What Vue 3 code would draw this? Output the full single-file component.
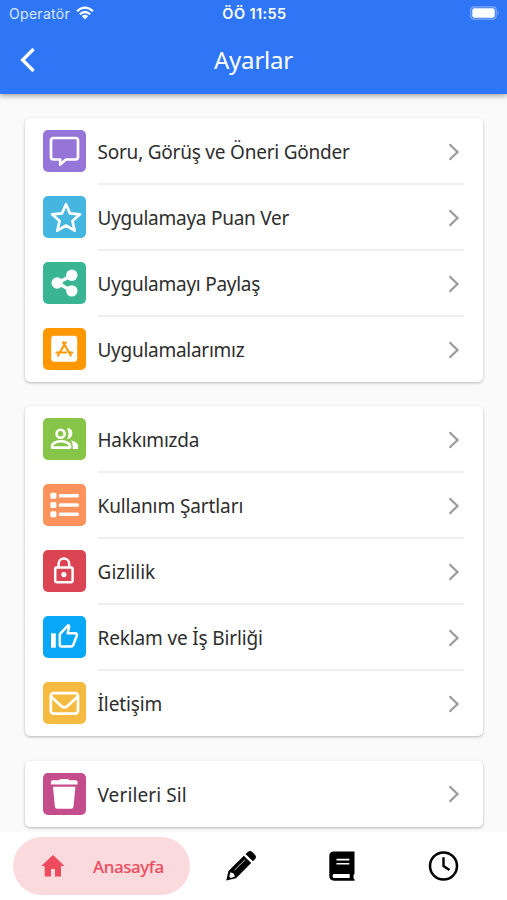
<script setup>
const groups = [
  [
    { label: 'Soru, Görüş ve Öneri Gönder', icon: 'chat', color: '#9575d8', spacing: -0.22 },
    { label: 'Uygulamaya Puan Ver', icon: 'star', color: '#45b6df', spacing: -0.26 },
    { label: 'Uygulamayı Paylaş', icon: 'share', color: '#39b594', spacing: -0.26 },
    { label: 'Uygulamalarımız', icon: 'apps', color: '#ff9800', spacing: -0.27 },
  ],
  [
    { label: 'Hakkımızda', icon: 'people', color: '#87c548', spacing: -0.22 },
    { label: 'Kullanım Şartları', icon: 'list', color: '#fb935d', spacing: -0.1 },
    { label: 'Gizlilik', icon: 'lock', color: '#da4453', spacing: 0.05 },
    { label: 'Reklam ve İş Birliği', icon: 'thumb', color: '#08a8f6', spacing: -0.15 },
    { label: 'İletişim', icon: 'mail', color: '#f5bb40', spacing: -0.1 },
  ],
  [{ label: 'Verileri Sil', icon: 'trash', color: '#c44d8c', spacing: 0.1 }],
]
</script>

<template>
  <div class="screen">
    <header class="header">
      <div class="status">
        <div class="carrier">
          <span>Operatör</span>
          <svg class="wifi" viewBox="0 0 18 14" fill="none" stroke="#fff" stroke-width="2.2">
            <path d="M1 5.1Q9-2 17 5.1" />
            <path d="M3.8 8.3Q9 3.7 14.2 8.3" />
            <path d="M5.8 10.1Q9 7.4 12.2 10.1L9 13.5Z" fill="#fff" stroke="none" />
          </svg>
        </div>
        <span class="time">ÖÖ 11:55</span>
        <svg class="battery" viewBox="0 0 30 14">
          <rect x=".8" y=".8" width="25.4" height="12.4" rx="3.4" fill="none" stroke="#83abfa" stroke-width="1.2" />
          <rect x="2.3" y="2.3" width="22.4" height="9.4" rx="2" fill="#fff" />
          <path d="M27.6 4.8q2.2 2.2 0 4.4z" fill="#83abfa" />
        </svg>
      </div>
      <div class="titlebar">
        <svg class="back" viewBox="0 0 16 26" fill="none" stroke="#fff" stroke-width="3.3">
          <path d="M13.6 2 2.6 13l11 11" />
        </svg>
        <h1>Ayarlar</h1>
      </div>
    </header>

    <main class="content">
      <section v-for="(group, g) in groups" :key="g" class="card">
        <div v-for="item in group" :key="item.label" class="row">
          <div class="tile" :style="{ background: item.color }">
            <svg viewBox="0 0 42 42" fill="none" stroke="#fff" stroke-width="2.7" stroke-linejoin="round">
              <path v-if="item.icon === 'chat'" d="M10.5 8H32.5Q35 8 35 10.5V27Q35 29.5 32.5 29.5H23L17.2 34.5V29.5H10.5Q8 29.5 8 27V10.5Q8 8 10.5 8Z" />
              <path v-else-if="item.icon === 'star'" d="M23 8.2l4 9.2 10 .9-7.6 6.6 2.3 9.8-8.7-5.2-8.7 5.2 2.3-9.8L9 18.3l10-.9Z" />
              <g v-else-if="item.icon === 'share'">
                <path d="M28.5 13.5 14.5 21l14 7.7" stroke-width="3.4" />
                <g fill="#fff" stroke="none"><circle cx="28.8" cy="13.2" r="5.7" /><circle cx="14.2" cy="21" r="5.7" /><circle cx="28.8" cy="28.9" r="5.7" /></g>
              </g>
              <g v-else-if="item.icon === 'apps'">
                <rect x="8.2" y="7.8" width="26" height="26" rx="3.2" fill="#fff" stroke="none" />
                <g stroke="#ff9800" stroke-width="2.1" stroke-linecap="round">
                  <path d="M20 14.3 27.8 27.5M22.8 14.3 16.7 24.5M13.4 24.5H23.1M26.7 24.5H29.3M15.8 26.3 15 27.6" />
                </g>
              </g>
              <g v-else-if="item.icon === 'people'">
                <circle cx="17.6" cy="15.8" r="4" stroke-width="2.6" />
                <path d="M9 29.6V28c0-3.1 5.7-4.7 9-4.7s9 1.6 9 4.7v1.6Z" stroke-width="2.6" />
                <path d="M24 10.5c7-1.5 7.5 10.5 0 10.7 2-3.7 2-7 0-10.7ZM27.7 22.5c4.3.6 7.3 2.7 7.3 5.6v3h-5.3v-3c0-2.1-.5-3.8-2-5.6Z" fill="#fff" stroke="none" />
              </g>
              <g v-else-if="item.icon === 'list'" fill="#fff" stroke="none">
                <rect v-for="y in [8.7, 18, 27.3]" :key="y" x="7.4" :y="y" width="6" height="6" rx="1.5" />
                <rect v-for="y in [10, 19.3, 28.6]" :key="y" x="15.8" :y="y" width="20.2" height="3.4" rx="1.5" />
              </g>
              <g v-else-if="item.icon === 'lock'" stroke-width="2.5">
                <rect x="12.2" y="17.5" width="17.4" height="14.7" rx="1.2" />
                <path d="M15.6 17.5v-3.7a5.3 5.3 0 0 1 10.6 0v3.7" /><circle cx="20.9" cy="24.6" r="2.6" fill="#fff" stroke="none" />
              </g>
              <g v-else-if="item.icon === 'thumb'">
                <path d="M8 17.3h4.8v14.4H8Z" fill="#fff" stroke="none" />
                <path d="M16.8 18.2 25.3 9.2 26.2 10.5 24.6 17.2H32.2Q34.2 17.2 33.8 19.7L30.2 29Q29.6 30.5 28 30.5H18.6Q16.8 30.5 16.8 28.7Z" stroke-width="2.5" />
              </g>
              <g v-else-if="item.icon === 'mail'">
                <rect x="7.8" y="11.2" width="27.2" height="20.4" rx="2.8" />
                <path d="M8.2 14.8 18.8 24.4Q21.4 26.5 24 24.4L34.6 14.8" />
              </g>
              <g v-else fill="#fff" stroke="none">
                <path d="M9.8 7.2H16L17.3 6H25.1L26.4 7.2H32.6Q34.5 7.2 34.5 9V11.4H7.9V9Q7.9 7.2 9.8 7.2ZM10 13.8H32.4L30.5 33.7Q30.3 35.8 28.2 35.8H14.2Q12.1 35.8 11.9 33.7Z" />
              </g>
            </svg>
          </div>
          <div class="body">
            <span class="label" :style="{ letterSpacing: item.spacing + 'px' }">{{ item.label }}</span>
            <svg class="chevron" viewBox="0 0 12 18" fill="none" stroke="#999" stroke-width="2.2">
              <path d="m1.5 1.2 8 7.8-8 7.8" />
            </svg>
          </div>
        </div>
      </section>
    </main>

    <nav class="tabs">
      <div class="active">
        <svg class="home" viewBox="0 0 24 22" fill="#ee4b5e"><path d="M12 0 23.5 11H20V21.5H14V14H10V21.5H3.7V11H.3Z" /></svg>
        <span>Anasayfa</span>
      </div>
      <div class="tab">
        <svg viewBox="0 0 32 32">
          <path d="M1.2 30.5 3.5 21 18.8 5.8 26.2 13 11 28.2Z" /><path d="M20.5 4.1 23 1.8Q25 .1 27 1.8L30.1 5Q31.8 7 30.1 9L27.9 11.3Z" />
          <path d="m5.6 22.8 2.9 1 .9 2.6-4 1.1-.7-.7ZM9.4 20.3 20 9.8" fill="#fff" stroke="#fff" stroke-width=".8" />
        </svg>
      </div>
      <div class="tab">
        <svg viewBox="0 0 32 32">
          <path d="M7.8 1.6H28.5V23.8L27.5 25.2V28.2L28.5 29.3V30.7H8.2Q3.3 30.7 3.3 25.8V6.1Q3.3 1.6 7.8 1.6Z" />
          <path d="M8 24H23.7V28H8Q6.5 28 6.5 26T8 24Z" fill="#fff" /><path d="M10.5 9.6H23.3M10.5 13.7H23.3" stroke="#fff" stroke-width="1.6" />
        </svg>
      </div>
      <div class="tab">
        <svg viewBox="0 0 32 32" fill="none" stroke="#000" stroke-width="2.5">
          <circle cx="16.5" cy="16" r="13.5" /><path d="M16.5 7.2V16L22.5 20" stroke-width="2.4" />
        </svg>
      </div>
    </nav>
  </div>
</template>

<style>
body { overflow: hidden; }
</style>

<style scoped>
.screen { width: 507px; height: 900px; display: flex; flex-direction: column; overflow: hidden; background: #fafafa; font-family: "Noto Sans", "Open Sans", sans-serif; color: #2d2d2d; }
.header { flex: none; height: 94px; background: #2f76f6; color: #fff; box-shadow: 0 2px 5px rgba(0, 0, 0, .34); z-index: 1; }
.status { height: 27px; display: grid; grid-template-columns: 1fr auto 1fr; align-items: center; padding: 0 7px 0 9px; font: 14px/27px Inter, sans-serif; }
.carrier { display: flex; align-items: center; gap: 6px; color: #dce8ff; letter-spacing: .3px; }
.wifi { width: 18px; height: 14px; margin-top: -1px; }
.time { font-size: 14.5px; font-weight: 600; letter-spacing: .4px; }
.battery { width: 30px; height: 14px; justify-self: end; margin-top: -1px; }
.titlebar { height: 67px; display: grid; grid-template-columns: 20px 1fr 20px; align-items: center; padding: 0 20px; }
.back { width: 16px; height: 26px; margin-top: -2px; }
h1 { margin: -2px 0 0; font-size: 24px; line-height: 67px; font-weight: 400; text-align: center; letter-spacing: -.2px; }
.content { flex: 1; min-height: 0; display: flex; flex-direction: column; gap: 24px; padding: 24px 24px 0 25px; }
.card { flex: none; background: #fff; border-radius: 5px; box-shadow: 0 1px 3px rgba(0, 0, 0, .28); }
.card:last-child { margin-top: .5px; }
.row { height: 66px; display: flex; gap: 12px; padding: 0 19px 0 18px; }
.tile { width: 43px; height: 42px; margin-top: 12px; flex: none; border-radius: 5px; }
.card:last-child .tile { margin-top: 12.5px; }
.tile svg { display: block; width: 42px; height: 42px; }
.body { flex: 1; height: 67px; box-sizing: border-box; display: flex; align-items: center; justify-content: space-between; padding-right: 4px; border-bottom: 2px solid transparent; }
.row:not(:last-child) .body { border-bottom-color: #eee; }
.label { font-size: 19px; line-height: 26px; white-space: nowrap; padding-top: 3px; margin-left: -.5px; }
.chevron { width: 12px; height: 18px; margin-top: 2px; }
.tabs { flex: none; height: 68px; display: flex; align-items: center; padding: 0 13px; background: #fff; z-index: 1; }
.active { width: 177px; height: 58px; display: flex; align-items: center; gap: 28px; padding-left: 28px; box-sizing: border-box; border-radius: 29px; background: #fadadd; color: #ee4b5e; font-size: 17px; font-weight: 500; letter-spacing: -.45px; }
.home { width: 24px; height: 22px; flex: none; }
.tab { width: 101.5px; display: flex; justify-content: center; }
.tab svg { width: 32px; height: 32px; }
</style>
